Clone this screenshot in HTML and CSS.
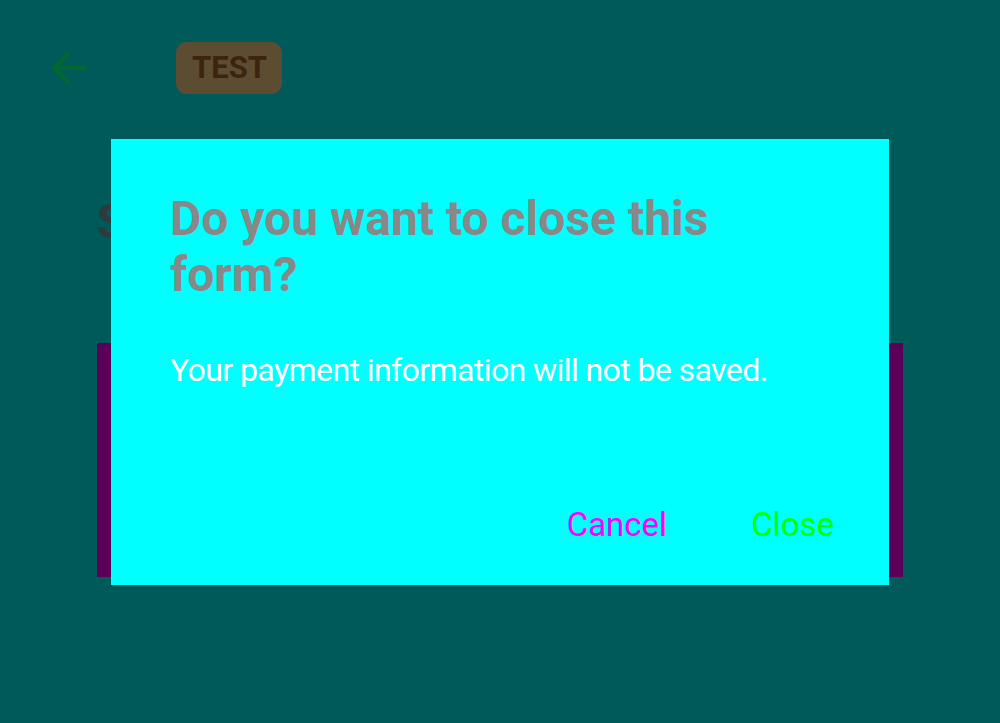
FILE: index.html
```html
<!DOCTYPE html>
<html lang="en">
<head>
<meta charset="utf-8">
<title>Close form</title>
<link rel="stylesheet" href="styles.css">
</head>
<body>
<div class="page">
  <header class="topbar">
    <button class="back" aria-label="Back">
      <svg width="40" height="40" viewBox="0 0 40 40"><path d="M37 20H6M20 6L6 20l14 14" fill="none" stroke="#006a2e" stroke-width="4" stroke-linecap="round" stroke-linejoin="round"/></svg>
    </button>
    <span class="badge">TEST</span>
  </header>
  <main class="content">
    <h1 class="heading">S</h1>
    <section class="card"></section>
  </main>
</div>
<div class="overlay">
  <div class="dialog" role="dialog">
    <h2 class="dialog-title">Do you want to close this form?</h2>
    <p class="dialog-body">Your payment information will not be saved.</p>
    <div class="actions">
      <button class="btn cancel">Cancel</button>
      <button class="btn close">Close</button>
    </div>
  </div>
</div>
</body>
</html>
```

FILE: styles.css
```css
html, body {
  margin: 0;
  padding: 0;
  height: 100%;
}
body {
  background: #005a5a;
  font-family: Roboto, "Liberation Sans", sans-serif;
  overflow: hidden;
}
.page {
  height: 723px;
  display: flex;
  flex-direction: column;
}
.topbar {
  display: flex;
  align-items: center;
  height: 52px;
  margin-top: 42px;
  padding-left: 48px;
}
.back {
  background: none;
  border: 0;
  padding: 0;
  width: 40px;
  height: 40px;
  display: flex;
  margin-right: 88px;
}
.badge {
  background: #5c4c32;
  color: #3d2410;
  font-weight: 700;
  font-size: 31px;
  line-height: 52px;
  height: 52px;
  padding: 0 15px 0 16px;
  border-radius: 11px;
}
.content {
  padding: 0 97px;
}
.heading {
  margin: 100px 0 0;
  font-size: 48px;
  line-height: 56px;
  font-weight: 700;
  color: #303a3a;
}
.card {
  margin-top: 93px;
  height: 234px;
  background: #5a0058;
}
.overlay {
  position: fixed;
  inset: 0;
  display: flex;
  align-items: center;
  justify-content: center;
}
.dialog {
  box-sizing: border-box;
  width: 778px;
  height: 446px;
  background: #00ffff;
  padding: 52px 55px 40px 59px;
  display: flex;
  flex-direction: column;
}
.dialog-title {
  margin: 0;
  font-size: 48px;
  line-height: 56px;
  font-weight: 700;
  color: #888888;
  padding-right: 100px;
}
.dialog-body {
  margin: 47px 0 0;
  font-size: 32px;
  line-height: 40px;
  letter-spacing: -0.58px;
  color: #ffffff;
}
.actions {
  margin-top: auto;
  display: flex;
  justify-content: flex-end;
  gap: 84px;
}
.btn {
  background: none;
  border: 0;
  padding: 0;
  font-family: Roboto, "Liberation Sans", sans-serif;
  font-size: 33px;
  line-height: 40px;
}
.cancel { color: #ff00ff; }
.close { color: #00ff00; }
```
